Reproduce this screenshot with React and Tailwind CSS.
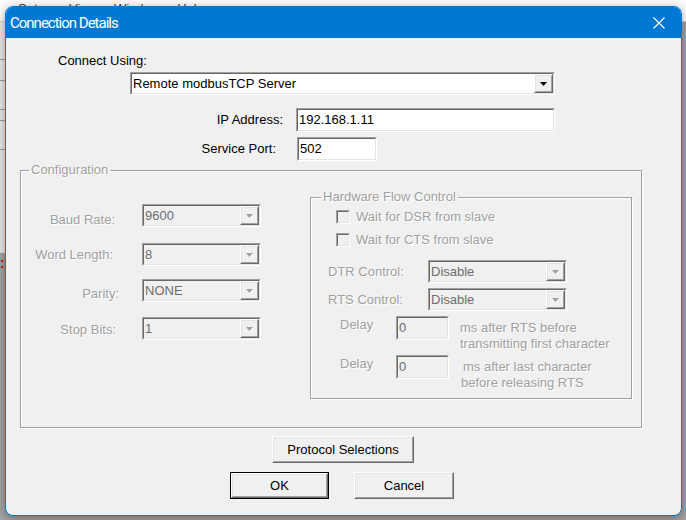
import React from 'react';

const sunkenOuter = "border border-t-[#a0a0a0] border-l-[#a0a0a0] border-b-white border-r-white";
const sunkenInner = "border border-t-[#696969] border-l-[#696969] border-b-[#e3e3e3] border-r-[#e3e3e3]";
const raisedOuter = "border border-t-white border-l-white border-b-[#696969] border-r-[#696969]";
const raisedInner = "border border-t-[#e3e3e3] border-l-[#e3e3e3] border-b-[#a0a0a0] border-r-[#a0a0a0]";
const dimText = "text-[#a0a0a0] [text-shadow:1px_1px_0_#fff]";

function Arrow({ disabled }) {
	return (
		<svg width="7" height="4" viewBox="0 0 7 4" className={disabled ? "drop-shadow-[1px_1px_0_#fff]" : ""}>
			<path d="M0 0h7L3.5 4z" fill={disabled ? "#a0a0a0" : "#000"} />
		</svg>
	);
}

function Combo({ value, className, disabled }) {
	return (
		<div className={`${sunkenOuter} ${className}`}>
			<div className={`${sunkenInner} h-full flex items-stretch ${disabled ? "bg-[#f0f0f0]" : "bg-white"}`}>
				<div className={`flex-1 flex items-center pl-[1px] ${disabled ? "text-[#6d6d6d]" : "text-black"}`}>{value}</div>
				<div className={`${raisedOuter} w-[19px] bg-[#f0f0f0]`}>
					<div className={`${raisedInner} h-full flex items-center justify-center`}>
						<Arrow disabled={disabled} />
					</div>
				</div>
			</div>
		</div>
	);
}

function Edit({ value, className, disabled }) {
	return (
		<div className={`${sunkenOuter} ${className}`}>
			<div className={`${sunkenInner} h-full flex items-center pl-[1px] ${disabled ? "bg-[#f0f0f0] text-[#6d6d6d]" : "bg-white text-black"}`}>
				{value}
			</div>
		</div>
	);
}

function Button({ label, className, isDefault }) {
	const face = (
		<div className={`${raisedOuter} h-full bg-[#f0f0f0]`}>
			<div className={`${raisedInner} h-full flex items-center justify-center text-black`}>{label}</div>
		</div>
	);
	if (isDefault) {
		return <div className={`border border-black ${className}`}>{face}</div>;
	}
	return <div className={className}>{face}</div>;
}

function Check({ label, className }) {
	return (
		<div className={`flex items-center h-[14px] ${className}`}>
			<div className={`${sunkenOuter} w-[14px] h-[14px] shrink-0`}>
				<div className={`${sunkenInner} h-full bg-[#f0f0f0]`}></div>
			</div>
			<span className={`ml-[6px] ${dimText}`}>{label}</span>
		</div>
	);
}

const configRows = [
	{ label: 'Baud Rate:', value: '9600', pr: 'pr-[4px]', pt: 'pt-[8px]', mt: 'mt-0' },
	{ label: 'Word Length:', value: '8', pr: 'pr-[6px]', pt: 'pt-[4px]', mt: 'mt-[15px]' },
	{ label: 'Parity:', value: 'NONE', pr: 'pr-0', pt: 'pt-[7px]', mt: 'mt-[13px]' },
	{ label: 'Stop Bits:', value: '1', pr: 'pr-[3px]', pt: 'pt-[5px]', mt: 'mt-[15px]' },
];

export default function App() {
	return (
		<div className="relative w-[686px] h-[520px] overflow-hidden bg-[#a3a3a3] font-['Liberation_Sans',Arial,sans-serif] text-[13px] leading-[16px]">
			{/* application behind the dialog */}
			<div className="h-[22px] bg-[#fbfbfb] border-b border-[#d0d0d0] flex items-start pt-[1px] pl-[18px] gap-[17px] text-[#444]">
				<span>Setup</span>
				<span>View</span>
				<span>Window</span>
				<span>Help</span>
			</div>
			<div className="h-[231px] w-[20px] bg-[#e6e6e6] flex flex-col">
				<div className="h-[38px] border-b border-[#9a9a9a]"></div>
				<div className="h-[21px] border-b border-[#9a9a9a]"></div>
				<div className="h-[29px] border-b border-[#9a9a9a]"></div>
				<div className="h-[11px] border-b border-[#9a9a9a]"></div>
				<div className="h-[29px] border-b border-[#9a9a9a]"></div>
			</div>
			<div className="w-[6px] pt-[2px] text-[#e00000] font-bold text-[14px]">:</div>

			{/* dialog */}
			<div className="absolute left-[5px] top-[6px] w-[677px] h-[510px] rounded-[8px] border border-[#0078d4] bg-[#f0f0f0] overflow-hidden shadow-[0_2px_10px_rgba(0,0,0,0.35)] flex flex-col">
				<div className="h-[31px] bg-[#0078d4] flex items-center justify-between pl-[4px] pr-[16px] shrink-0">
					<span className="font-['Roboto',sans-serif] text-[15px] tracking-[-1px] text-white leading-[20px]">Connection Details</span>
					<svg width="12" height="12" viewBox="0 0 12 12">
						<path d="M0.5 0.5L11.5 11.5M11.5 0.5L0.5 11.5" stroke="#fff" strokeWidth="1.1" />
					</svg>
				</div>

				<div className="flex flex-col">
					<div className="ml-[52px] mt-[15px] text-black">Connect Using:</div>
					<Combo value="Remote modbusTCP Server" className="ml-[124px] mt-[3px] w-[425px] h-[23px]" />

					<div className="flex items-center mt-[13px]">
						<div className="w-[277px] text-right text-black">IP Address:</div>
						<Edit value="192.168.1.11" className="ml-[13px] w-[259px] h-[24px]" />
					</div>
					<div className="flex items-center mt-[5px]">
						<div className="w-[270px] text-right text-black">Service Port:</div>
						<Edit value="502" className="ml-[21px] w-[80px] h-[24px]" />
					</div>

					<fieldset className="ml-[14px] mt-[1px] w-[622px] h-[266px] border border-[#a0a0a0] shadow-[1px_1px_0_#fff,inset_1px_1px_0_#fff] px-0">
						<legend className={`ml-[8px] px-[2px] ${dimText}`}>Configuration</legend>
						<div className="flex">
							<div className="w-[289px] pt-[26px] flex flex-col">
								{configRows.map(r => (
									<div key={r.label} className={`flex items-start ${r.mt}`}>
										<div className={`w-[98px] text-right ${r.pr} ${r.pt} ${dimText}`}>{r.label}</div>
										<Combo value={r.value} disabled className="ml-[23px] w-[119px] h-[23px]" />
									</div>
								))}
							</div>

							<fieldset className="mt-[11px] w-[322px] h-[210px] border border-[#a0a0a0] shadow-[1px_1px_0_#fff,inset_1px_1px_0_#fff] px-0">
								<legend className={`ml-[10px] px-[2px] ${dimText}`}>Hardware Flow Control</legend>
								<Check label="Wait for DSR from slave" className="ml-[25px] mt-[5px]" />
								<Check label="Wait for CTS from slave" className="ml-[25px] mt-[9px]" />

								<div className="flex items-center ml-[17px] mt-[13px]">
									<div className={`w-[100px] ${dimText}`}>DTR Control:</div>
									<Combo value="Disable" disabled className="w-[139px] h-[23px]" />
								</div>
								<div className="flex items-center ml-[17px] mt-[5px]">
									<div className={`w-[100px] ${dimText}`}>RTS Control:</div>
									<Combo value="Disable" disabled className="w-[139px] h-[23px]" />
								</div>

								<div className="flex items-start h-[24px] ml-[29px] mt-[5px]">
									<div className={`w-[56px] pt-[1px] ${dimText}`}>Delay</div>
									<Edit value="0" disabled className="w-[53px] h-[24px]" />
									<div className={`ml-[11px] pt-[4px] ${dimText}`}>
										<div>ms after RTS before</div>
										<div>transmitting first character</div>
									</div>
								</div>
								<div className="flex items-start h-[24px] ml-[29px] mt-[15px]">
									<div className={`w-[56px] pt-[1px] ${dimText}`}>Delay</div>
									<Edit value="0" disabled className="w-[53px] h-[24px]" />
									<div className={`ml-[14px] pt-[4px] ${dimText}`}>
										<div>ms after last character</div>
										<div className="-ml-[2px]">before releasing RTS</div>
									</div>
								</div>
							</fieldset>
						</div>
					</fieldset>

					<Button label="Protocol Selections" className="ml-[266px] mt-[8px] w-[142px] h-[27px]" />
					<div className="flex mt-[9px] ml-[224px]">
						<Button label="OK" isDefault className="w-[99px] h-[27px]" />
						<Button label="Cancel" className="ml-[25px] w-[100px] h-[27px]" />
					</div>
				</div>
			</div>
		</div>
	);
}
